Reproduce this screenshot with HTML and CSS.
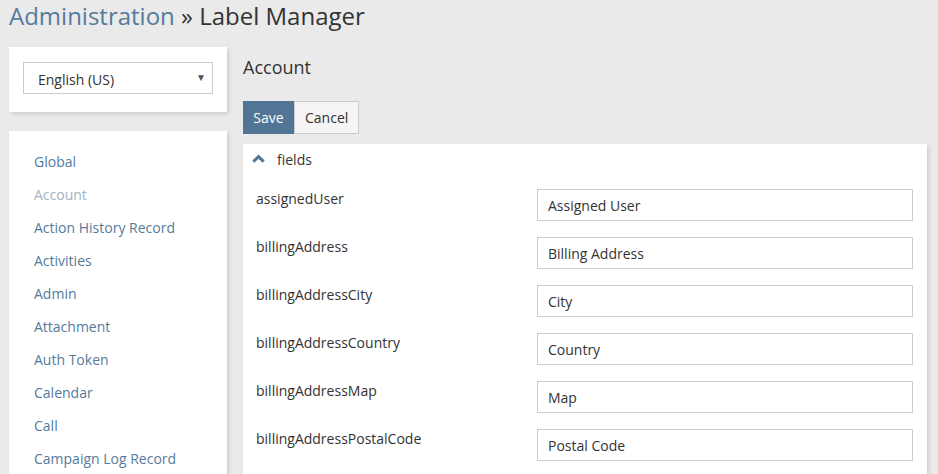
FILE: index.html
```html
<!DOCTYPE html>
<html>
<head>
<meta charset="utf-8">
<link rel="stylesheet" href="styles.css">
</head>
<body>
<div class="page">
  <h1 class="title"><a class="crumb">Administration</a> » Label Manager</h1>
  <div class="layout">
    <aside class="side">
      <div class="card lang-card">
        <div class="select">
          <span>English (US)</span>
          <span class="caret">▼</span>
        </div>
      </div>
      <div class="card nav-card">
        <ul class="nav">
          <li><a>Global</a></li>
          <li><a class="active">Account</a></li>
          <li><a>Action History Record</a></li>
          <li><a>Activities</a></li>
          <li><a>Admin</a></li>
          <li><a>Attachment</a></li>
          <li><a>Auth Token</a></li>
          <li><a>Calendar</a></li>
          <li><a>Call</a></li>
          <li><a>Campaign Log Record</a></li>
        </ul>
      </div>
    </aside>
    <main class="main">
      <h2 class="scope">Account</h2>
      <div class="btns">
        <button class="btn primary">Save</button><button class="btn">Cancel</button>
      </div>
      <div class="panel">
        <div class="panel-head">
          <svg class="chev" width="13" height="9" viewBox="0 0 13 9"><path d="M0.3 6.6 L6.5 0.6 L12.7 6.6 L10.6 8.7 L6.5 4.7 L2.4 8.7 Z" fill="#4e7496"/></svg>
          <span>fields</span>
        </div>
        <div class="rows">
          <div class="row"><div class="lbl">assignedUser</div><div class="inp">Assigned User</div></div>
          <div class="row"><div class="lbl">billingAddress</div><div class="inp">Billing Address</div></div>
          <div class="row"><div class="lbl">billingAddressCity</div><div class="inp">City</div></div>
          <div class="row"><div class="lbl">billingAddressCountry</div><div class="inp">Country</div></div>
          <div class="row"><div class="lbl">billingAddressMap</div><div class="inp">Map</div></div>
          <div class="row"><div class="lbl">billingAddressPostalCode</div><div class="inp">Postal Code</div></div>
        </div>
      </div>
    </main>
  </div>
</div>
</body>
</html>
```

FILE: styles.css
```css
* { box-sizing: border-box; }
html, body { margin: 0; padding: 0; }
body {
  background: #eaeaea;
  font-family: "Open Sans", "Liberation Sans", sans-serif;
  font-size: 14px;
  color: #333;
  overflow: hidden;
  height: 474px;
}
.page { padding: 0 11px 0 9px; }
.title {
  margin: 0;
  font-size: 24px;
  font-weight: 400;
  line-height: 32px;
  height: 47px;
  color: #333;
}
.crumb { color: #557a9c; }
.layout { display: flex; gap: 16px; align-items: flex-start; }
.side { width: 218px; flex: none; }
.card {
  background: #fff;
  box-shadow: 2px 2px 4px rgba(0,0,0,0.12);
}
.lang-card { padding: 15px 14px 17px 14px; height: 65px; margin-bottom: 19px; }
.select {
  height: 32px;
  border: 1px solid #cccccc;
  display: flex;
  align-items: center;
  justify-content: space-between;
  padding: 2px 6px 0 14px;
  font-size: 14px;
  color: #333;
}
.caret { font-size: 10px; color: #555; margin-top: -4px; }
.nav-card { padding: 14px 0 0 25px; height: 343px; }
.nav { list-style: none; margin: 0; padding: 0; }
.nav li { height: 33px; line-height: 33px; }
.nav a { color: #557a9c; font-size: 14px; }
.nav a.active { color: #a3b3c3; }
.main { flex: 1; min-width: 0; }
.scope {
  margin: 0;
  font-size: 18px;
  font-weight: 400;
  line-height: 24px;
  padding-top: 8px;
  height: 54px;
  color: #333;
}
.btns { display: flex; height: 33px; margin-bottom: 10px; }
.btn {
  font-family: inherit;
  font-size: 14px;
  height: 33px;
  border: 1px solid #ccc;
  background: #f5f5f5;
  color: #333;
  padding: 0 10px;
  margin: 0;
}
.btn.primary { background: #527595; border-color: #527595; color: #fff; width: 51px; padding: 0; }
.panel {
  background: #fff;
  box-shadow: 2px 2px 4px rgba(0,0,0,0.12);
  height: 330px;
}
.panel-head {
  display: flex;
  align-items: center;
  height: 30px;
  padding: 0 0 0 9px;
  font-size: 14px;
}
.chev { margin: -2px 12px 0 0; }
.rows { padding: 15px 14px 0 13px; }
.row { display: flex; height: 48px; }
.lbl { width: 281px; line-height: 20px; }
.inp {
  flex: 1;
  height: 32px;
  border: 1px solid #cccccc;
  padding: 1px 10px 0;
  line-height: 30px;
  color: #333;
}
```
